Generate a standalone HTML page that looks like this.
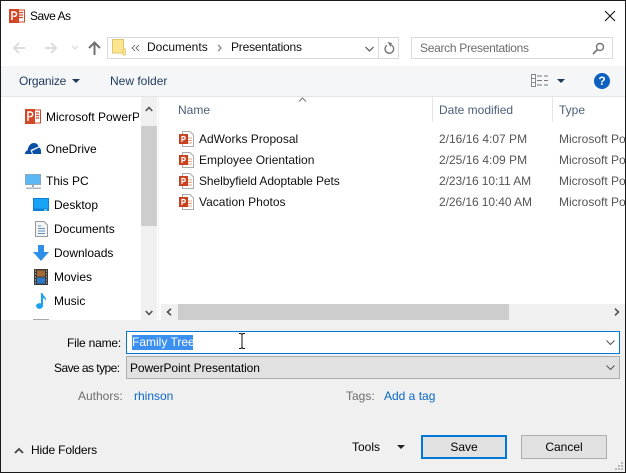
<!DOCTYPE html>
<html><head><meta charset="utf-8">
<style>
html,body{margin:0;padding:0;width:626px;height:473px;overflow:hidden;background:#fff}
body{position:relative;font-family:"Liberation Sans",sans-serif;font-size:12px;color:#000}
.t{position:absolute;white-space:nowrap;line-height:16px;height:16px}
.b{position:absolute;box-sizing:border-box}
svg{position:absolute;overflow:visible}
.lk{color:#0a66c8}
.hd{color:#4c607a}
.gr{color:#6d6d6d}
</style></head><body>

<!-- toolbar -->
<div class="b" style="left:1px;top:66px;width:624px;height:30px;background:#f5f6f7"></div>
<div class="b" style="left:1px;top:96px;width:624px;height:1px;background:#e5e5e5"></div>

<!-- bottom panel -->
<div class="b" style="left:1px;top:320px;width:624px;height:152px;background:#f0f0f0"></div>

<!-- window border -->
<div class="b" style="left:0;top:0;width:626px;height:1px;background:#1a1a1a"></div>
<div class="b" style="left:0;top:0;width:1px;height:473px;background:#1a1a1a"></div>
<div class="b" style="left:625px;top:0;width:1px;height:473px;background:#1a1a1a"></div>
<div class="b" style="left:0;top:472px;width:626px;height:1px;background:#1a1a1a"></div>

<!-- title -->
<svg style="left:9px;top:9px" width="16" height="14" viewBox="0 0 16 14"><rect x="7" y="1" width="8.500" height="12" fill="#fff" stroke="#d24726"/><path d="M10 3.500h4M10 6h4M10 8.500h4" stroke="#d24726" stroke-width="1.200"/><rect x="0" y="0" width="10" height="14" fill="#d24726"/><path d="M3 11V3h2.400a2.100 2.100 0 0 1 0 4.300H4.300" fill="none" stroke="#fff" stroke-width="1.500"/></svg>
<div class="t" style="left:30px;top:8px;letter-spacing:-.5px">Save As</div>
<svg style="left:604px;top:10px" width="12" height="12" viewBox="0 0 12 12"><path d="M1 1l10 10M11 1L1 11" stroke="#111" stroke-width="1.100"/></svg>

<!-- nav arrows -->
<svg style="left:14px;top:41px" width="90" height="14" viewBox="0 0 90 14"><path d="M0 7h11M5 2L0 7l5 5" fill="none" stroke="#dcdcdc" stroke-width="2"/><path d="M31 7h11M37 2l5 5-5 5" fill="none" stroke="#dcdcdc" stroke-width="2"/><path d="M58 5l3 3 3-3" fill="none" stroke="#dcdcdc" stroke-width="1.300"/><path d="M80.500 14V2M75 7l5.500-5.500L86 7" fill="none" stroke="#6f6f6f" stroke-width="2"/></svg>

<!-- address bar -->
<div class="b" style="left:107px;top:37px;width:292px;height:22px;border:1px solid #d9d9d9;background:#fff"></div>
<div class="b" style="left:378px;top:38px;width:1px;height:20px;background:#d9d9d9"></div>
<svg style="left:112px;top:39px" width="14" height="17" viewBox="0 0 14 17"><path d="M.5.500h11v13.500h-11z" fill="#fde58f" stroke="#e0c56c"/><rect x="11" y="10" width="2.500" height="6" fill="#fde58f" stroke="#e0c56c" stroke-width=".7"/></svg>
<svg style="left:131px;top:44px" width="10" height="8" viewBox="0 0 10 8"><path d="M4 1L1 4l3 3M8 1L5 4l3 3" fill="none" stroke="#777" stroke-width="1"/></svg>
<div class="t" style="left:147px;top:39px;color:#111">Documents</div>
<svg style="left:217px;top:44px" width="6" height="8" viewBox="0 0 6 8"><path d="M1 1l3 3-3 3" fill="none" stroke="#888" stroke-width="1.300"/></svg>
<div class="t" style="left:231px;top:39px;letter-spacing:-.2px;color:#111">Presentations</div>
<svg style="left:365px;top:46px" width="9" height="6" viewBox="0 0 9 6"><path d="M.500 1l4 4 4-4" fill="none" stroke="#666" stroke-width="1.300"/></svg>
<svg style="left:384px;top:42px" width="11" height="12" viewBox="0 0 11 12"><path d="M7.500 3.200A4.300 4.300 0 1 1 3 3.300" fill="none" stroke="#777" stroke-width="1.400"/><path d="M3.500 0l4.500 1-1.500 4z" fill="#777"/></svg>

<!-- search -->
<div class="b" style="left:411px;top:37px;width:202px;height:22px;border:1px solid #d9d9d9;background:#fff"></div>
<div class="t gr" style="left:420px;top:40px;letter-spacing:-.3px">Search Presentations</div>
<svg style="left:592px;top:42px" width="13" height="13" viewBox="0 0 13 13"><circle cx="8" cy="5" r="3.500" fill="none" stroke="#777" stroke-width="1.400"/><path d="M5.500 7.500L1 12" stroke="#777" stroke-width="1.800"/></svg>

<!-- toolbar items -->
<div class="t hd" style="left:19px;top:73px;color:#1e395b;letter-spacing:-.2px">Organize</div>
<div class="b" style="left:72px;top:79px;width:0;height:0;border-left:4px solid transparent;border-right:4px solid transparent;border-top:4px solid #1e395b"></div>
<div class="t" style="left:110px;top:73px;color:#1e395b">New folder</div>
<svg style="left:531px;top:74px" width="18" height="13" viewBox="0 0 18 13"><rect x=".5" y=".5" width="4" height="12" fill="#fff" stroke="#888"/><path d="M1 4.500h3M1 8.500h3" stroke="#888"/><path d="M6 2h5M13 2h4M6 6.500h5M13 6.500h4M6 11h5M13 11h4" stroke="#777"/></svg>
<div class="b" style="left:557px;top:79px;width:0;height:0;border-left:4px solid transparent;border-right:4px solid transparent;border-top:4px solid #1e395b"></div>
<div class="b" style="left:594px;top:73px;width:16px;height:16px;border-radius:50%;background:#0d5fc0"></div>
<div class="t" style="left:594px;top:73px;width:16px;text-align:center;color:#fff;font-weight:bold">?</div>

<!-- nav pane -->
<svg style="left:25px;top:109px" width="16" height="15" viewBox="0 0 16 15"><rect x="7" y="1" width="8.500" height="13" fill="#fff" stroke="#d24726"/><path d="M11 4h3M11 6.500h3M11 9h3" stroke="#d24726" stroke-width="1.200"/><rect x="0" y="0" width="10" height="15" fill="#d24726"/><path d="M3 12V3h2.400a2.200 2.200 0 0 1 0 4.600H4.300" fill="none" stroke="#fff" stroke-width="1.500"/></svg>
<div class="b" style="left:46px;top:108px;width:93px;height:18px;overflow:hidden"><div class="t" style="left:0;top:1px">Microsoft PowerPoint</div></div>

<svg style="left:25px;top:143px" width="16" height="11" viewBox="0 0 16 11"><path d="M0 11c0-2 .8-3.200 2.500-3.500C3.300 3 5.500 0 9 0c2.500 0 4 1.500 4.500 3.500L5.500 7 7 11zM8 11l-1-3 7-3.500c1.500.8 2 2 2 3.500v3z" fill="#0a4ea6"/></svg>
<div class="t" style="left:46px;top:141px">OneDrive</div>

<svg style="left:25px;top:174px" width="16" height="15" viewBox="0 0 16 15"><rect x=".5" y=".5" width="15" height="10" fill="#5cb8f5" stroke="#88a8c0"/><rect x="7" y="11" width="2" height="2" fill="#9ab"/><rect x="1" y="13.500" width="15" height="1.500" fill="#a9b8c4"/></svg>
<div class="t" style="left:46px;top:173px">This PC</div>

<svg style="left:33px;top:198px" width="16" height="13" viewBox="0 0 16 13"><rect x="0" y="0" width="16" height="13" fill="#0e7fd6"/><rect x="1" y="1" width="14" height="9.500" fill="#16a3f5"/><path d="M11 12h3" stroke="#cfe" /></svg>
<div class="t" style="left:54px;top:197px">Desktop</div>

<svg style="left:35px;top:221px" width="13" height="16" viewBox="0 0 13 16"><path d="M.5.500h8.500l3.500 3.500v11.500H.5z" fill="#f4f4f4" stroke="#999"/><path d="M3 5h3M3 7.500h7M3 10h7M3 12.500h7" stroke="#5a8fc0"/></svg>
<div class="t" style="left:54px;top:221px">Documents</div>

<svg style="left:33px;top:245px" width="16" height="16" viewBox="0 0 16 16"><path d="M5 0h6v7h5l-8 9-8-9h5z" fill="#2f8fe8"/></svg>
<div class="t" style="left:54px;top:245px">Downloads</div>

<svg style="left:34px;top:269px" width="14" height="16" viewBox="0 0 14 16"><rect width="14" height="16" fill="#3a3a3a"/><rect x="3" y="1.500" width="8" height="6" fill="#a86a30"/><rect x="3" y="8.500" width="8" height="6" fill="#2a78c8"/><path d="M1 2h1M1 5h1M1 8h1M1 11h1M1 14h1M12 2h1M12 5h1M12 8h1M12 11h1M12 14h1" stroke="#ddd"/></svg>
<div class="t" style="left:54px;top:269px">Movies</div>

<svg style="left:36px;top:293px" width="11" height="16" viewBox="0 0 11 16"><ellipse cx="3.500" cy="13" rx="3.400" ry="2.900" fill="#19a2f0"/><path d="M5 13V0h1.500c.3 3 4 3.500 3.500 8-.8-2-2.500-3-3-3v8z" fill="#19a2f0"/></svg>
<div class="t" style="left:54px;top:293px">Music</div>

<div class="b" style="left:33px;top:319px;width:16px;height:1px;background:#aaa"></div>

<!-- nav scrollbar -->
<div class="b" style="left:141px;top:97px;width:16px;height:223px;background:#f0f0f0"></div>
<div class="b" style="left:141px;top:126px;width:16px;height:100px;background:#cdcdcd"></div>
<svg style="left:145px;top:106px" width="8" height="6" viewBox="0 0 8 6"><path d="M.7 5L4 1.500 7.300 5" fill="none" stroke="#505050" stroke-width="1.600"/></svg>
<svg style="left:145px;top:310px" width="8" height="6" viewBox="0 0 8 6"><path d="M.7 1L4 4.500 7.300 1" fill="none" stroke="#505050" stroke-width="1.600"/></svg>
<div class="b" style="left:158px;top:97px;width:1px;height:223px;background:#f1f1f1"></div>

<!-- column headers -->
<svg style="left:298px;top:97px" width="9" height="5" viewBox="0 0 9 5"><path d="M1 4.500L4.500 1 8 4.500" fill="none" stroke="#777"/></svg>
<div class="t hd" style="left:178px;top:102px">Name</div>
<div class="t hd" style="left:439px;top:102px">Date modified</div>
<div class="t hd" style="left:559px;top:102px">Type</div>
<div class="b" style="left:432px;top:97px;width:1px;height:25px;background:#e5e5e5"></div>
<div class="b" style="left:552px;top:97px;width:1px;height:25px;background:#e5e5e5"></div>

<!-- file rows -->
<svg style="left:179px;top:131px" width="15" height="16" viewBox="0 0 15 16"><path d="M3.500.5h7.500l3.500 3.500v11.500h-11z" fill="#fff" stroke="#aaa"/><path d="M9 7h4M9 9.500h4M9 12h4" stroke="#e8a080"/><rect y="3" width="9" height="10" fill="#c8401e"/><path d="M3 11V5.500h1.800a1.500 1.500 0 0 1 0 3H3.500" fill="none" stroke="#fff" stroke-width="1.200"/></svg>
<div class="t" style="left:199px;top:131px;color:#111">AdWorks Proposal</div>
<div class="t" style="left:439px;top:131px;color:#555">2/16/16 4:07 PM</div>
<div class="t" style="left:559px;top:131px;color:#555">Microsoft Po</div>

<svg style="left:179px;top:152px" width="15" height="16" viewBox="0 0 15 16"><path d="M3.500.5h7.500l3.500 3.500v11.500h-11z" fill="#fff" stroke="#aaa"/><path d="M9 7h4M9 9.500h4M9 12h4" stroke="#e8a080"/><rect y="3" width="9" height="10" fill="#c8401e"/><path d="M3 11V5.500h1.800a1.500 1.500 0 0 1 0 3H3.500" fill="none" stroke="#fff" stroke-width="1.200"/></svg>
<div class="t" style="left:199px;top:152px;color:#111">Employee Orientation</div>
<div class="t" style="left:439px;top:152px;color:#555">2/25/16 4:09 PM</div>
<div class="t" style="left:559px;top:152px;color:#555">Microsoft Po</div>

<svg style="left:179px;top:173px" width="15" height="16" viewBox="0 0 15 16"><path d="M3.500.5h7.500l3.500 3.500v11.500h-11z" fill="#fff" stroke="#aaa"/><path d="M9 7h4M9 9.500h4M9 12h4" stroke="#e8a080"/><rect y="3" width="9" height="10" fill="#c8401e"/><path d="M3 11V5.500h1.800a1.500 1.500 0 0 1 0 3H3.500" fill="none" stroke="#fff" stroke-width="1.200"/></svg>
<div class="t" style="left:199px;top:173px;color:#111;letter-spacing:-.08px">Shelbyfield Adoptable Pets</div>
<div class="t" style="left:439px;top:173px;color:#555;letter-spacing:-.07px">2/23/16 10:11 AM</div>
<div class="t" style="left:559px;top:173px;color:#555">Microsoft Po</div>

<svg style="left:179px;top:194px" width="15" height="16" viewBox="0 0 15 16"><path d="M3.500.5h7.500l3.500 3.500v11.500h-11z" fill="#fff" stroke="#aaa"/><path d="M9 7h4M9 9.500h4M9 12h4" stroke="#e8a080"/><rect y="3" width="9" height="10" fill="#c8401e"/><path d="M3 11V5.500h1.800a1.500 1.500 0 0 1 0 3H3.500" fill="none" stroke="#fff" stroke-width="1.200"/></svg>
<div class="t" style="left:199px;top:194px;color:#111">Vacation Photos</div>
<div class="t" style="left:439px;top:194px;color:#555;letter-spacing:-.07px">2/26/16 10:40 AM</div>
<div class="t" style="left:559px;top:194px;color:#555">Microsoft Po</div>

<!-- h scrollbar -->
<div class="b" style="left:161px;top:304px;width:464px;height:16px;background:#f0f0f0"></div>
<div class="b" style="left:178px;top:304px;width:331px;height:16px;background:#cdcdcd"></div>
<svg style="left:166px;top:308px" width="6" height="8" viewBox="0 0 6 8"><path d="M5 .7L1.500 4 5 7.300" fill="none" stroke="#505050" stroke-width="1.600"/></svg>
<svg style="left:614px;top:308px" width="6" height="8" viewBox="0 0 6 8"><path d="M1 .7L4.500 4 1 7.300" fill="none" stroke="#505050" stroke-width="1.600"/></svg>

<!-- file name -->
<div class="t" style="left:67px;top:335px;letter-spacing:-.2px">File name:</div>
<div class="b" style="left:126px;top:331px;width:494px;height:23px;border:1px solid #0078d7;background:#fff"></div>
<div class="b" style="left:132px;top:335px;width:61px;height:15px;background:#3b8ff0"></div>
<div class="t" style="left:132px;top:334px;color:#fff">Family Tree</div>
<svg style="left:238px;top:333px" width="8" height="16" viewBox="0 0 8 16"><path d="M1 .5h2l1 1 1-1h2M4 1.500v13M1 15.500h2l1-1 1 1h2" fill="none" stroke="#111"/></svg>
<svg style="left:606px;top:340px" width="9" height="5" viewBox="0 0 9 5"><path d="M.5.500l4 4 4-4" fill="none" stroke="#555"/></svg>

<!-- save as type -->
<div class="t" style="left:54px;top:360px;letter-spacing:-.55px">Save as type:</div>
<div class="b" style="left:126px;top:356px;width:494px;height:23px;border:1px solid #adadad;background:#e1e1e1"></div>
<div class="t" style="left:130px;top:360px;letter-spacing:-.1px">PowerPoint Presentation</div>
<svg style="left:606px;top:365px" width="9" height="5" viewBox="0 0 9 5"><path d="M.5.500l4 4 4-4" fill="none" stroke="#555"/></svg>

<!-- authors/tags -->
<div class="t gr" style="left:78px;top:388px">Authors:</div>
<div class="t lk" style="left:134px;top:388px">rhinson</div>
<div class="t gr" style="left:346px;top:388px">Tags:</div>
<div class="t lk" style="left:384px;top:388px">Add a tag</div>

<!-- hide folders -->
<svg style="left:14px;top:447px" width="10" height="7" viewBox="0 0 10 7"><path d="M1 6l4-4 4 4" fill="none" stroke="#444" stroke-width="1.800"/></svg>
<div class="t" style="left:31px;top:442px;letter-spacing:-.17px">Hide Folders</div>

<!-- buttons -->
<div class="t" style="left:352px;top:439px">Tools</div>
<div class="b" style="left:397px;top:445px;width:0;height:0;border-left:4px solid transparent;border-right:4px solid transparent;border-top:4px solid #222"></div>
<div class="b" style="left:421px;top:435px;width:86px;height:24px;border:2px solid #0078d7;background:#e1e1e1;text-align:center;line-height:20px">Save</div>
<div class="b" style="left:521px;top:435px;width:86px;height:24px;border:1px solid #adadad;background:#e1e1e1;text-align:center;line-height:22px">Cancel</div>
<svg style="left:614px;top:461px" width="10" height="10" viewBox="0 0 10 10"><path d="M7 1h2v2H7zM4 4h2v2H4zM7 4h2v2H7zM1 7h2v2H1zM4 7h2v2H4zM7 7h2v2H7z" fill="#b8b8b8"/></svg>
</body></html>
